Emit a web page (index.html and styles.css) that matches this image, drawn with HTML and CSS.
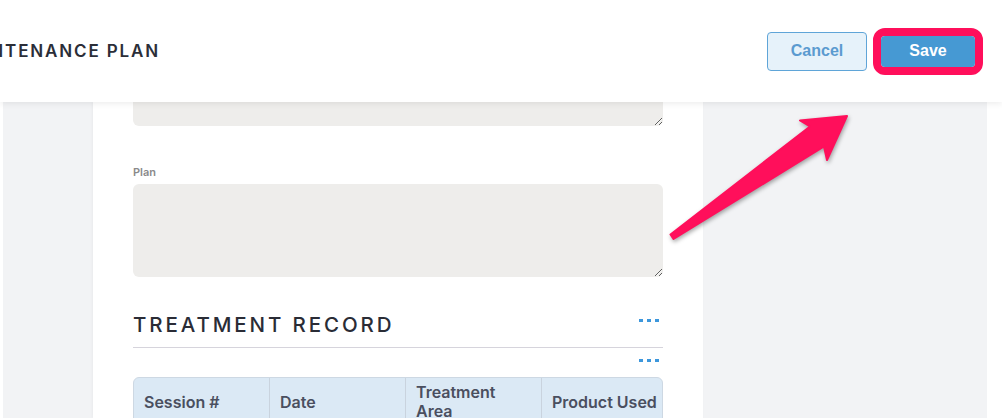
FILE: index.html
```html
<!DOCTYPE html>
<html>
<head>
<meta charset="utf-8">
<link rel="stylesheet" href="styles.css">
</head>
<body>
<header class="topbar">
  <h1 class="title">MAINTENANCE PLAN</h1>
  <div class="actions">
    <button class="btn btn-cancel">Cancel</button>
    <div class="highlight"><button class="btn btn-save">Save</button></div>
  </div>
</header>
<main class="page">
  <section class="card">
    <textarea class="field field-top"></textarea>
    <label class="label">Plan</label>
    <textarea class="field field-plan"></textarea>
    <div class="section-head">
      <h2 class="section-title">TREATMENT RECORD</h2>
      <div class="dots"><i></i><i></i><i></i></div>
    </div>
    <div class="subbar"><div class="dots"><i></i><i></i><i></i></div></div>
    <div class="table">
      <div class="th">Session #</div>
      <div class="th">Date</div>
      <div class="th">Treatment Area</div>
      <div class="th th-last">Product Used</div>
    </div>
  </section>
</main>
<svg class="arrow" width="1002" height="418" viewBox="0 0 1002 418">
  <polygon points="670.5,234.5 810,126.5 800,120.5 847,116 827,160 824,146.5 673.5,239" fill="#ff0f5b" stroke="#ff0f5b" stroke-width="2" stroke-linejoin="round"/>
</svg>
</body>
</html>
```
FILE: styles.css
```css
* { box-sizing: border-box; }
html, body { margin: 0; height: 100%; overflow: hidden; }
body { background: #fff; font-family: Inter, "Noto Sans", sans-serif; position: relative; }

.topbar {
  height: 102px;
  background: #fff;
  display: flex;
  align-items: center;
  justify-content: space-between;
  position: relative;
  z-index: 2;
  box-shadow: 0 2px 6px rgba(0,0,0,0.07);
  overflow: hidden;
}
.title {
  margin: 0 0 0 -48px;
  font-size: 17px;
  font-weight: 600;
  letter-spacing: 1.85px;
  color: #2b2e38;
  white-space: nowrap;
}
.actions { display: flex; align-items: center; gap: 6px; margin-right: 19px; }
.btn {
  font-family: "Liberation Sans", Arial, sans-serif;
  font-weight: 700;
  font-size: 16px;
  border-radius: 4px;
  cursor: pointer;
}
.btn-cancel {
  width: 100px; height: 39px;
  background: #e6f2fa;
  border: 1px solid #5fa5d8;
  color: #5b9bd0;
}
.highlight {
  border: 8px solid #ff0f5b;
  border-radius: 12px;
  display: flex;
}
.btn-save {
  width: 94px; height: 31px;
  background: #4699d3;
  border: none;
  color: #fff;
}

.page {
  height: calc(100% - 102px);
  margin: 0 15px 0 3px;
  background: #f2f3f5;
  overflow: hidden;
  padding-left: 90px;
}
.card {
  width: 610px;
  height: 100%;
  background: #fff;
  padding: 0 40px;
  display: flex;
  flex-direction: column;
  box-shadow: -1px 0 3px rgba(0,0,0,0.04);
}
.field {
  display: block;
  width: 530px;
  background: #eeedeb;
  border: none;
  border-radius: 6px;
  font: inherit;
  flex: none;
}
.field-top { height: 80px; margin-top: -56px; }
.label {
  margin-top: 39px;
  font-size: 11px;
  font-weight: 600;
  color: #8a8a8a;
  line-height: 14px;
  height: 19px;
  flex: none;
}
.field-plan { height: 93px; }
.section-head {
  margin-top: 33px;
  display: flex;
  align-items: center;
  justify-content: space-between;
  height: 38px;
  border-bottom: 1px solid #d6d4dc;
  padding-bottom: 8px;
  flex: none;
}
.section-title {
  margin: 0;
  font-size: 20.5px;
  font-weight: 500;
  letter-spacing: 2.9px;
  color: #2a2c36;
}
.dots { display: flex; gap: 4px; margin-right: 4px; align-self: flex-start; margin-top: 3px; }
.section-head .dots { margin-top: 9px; }
.dots i { width: 4px; height: 3px; background: #3d97dc; display: block; }
.subbar { display: flex; justify-content: flex-end; height: 29px; padding-top: 8px; flex: none; }
.table {
  display: grid;
  grid-template-columns: 136px 136px 136px 122px;
  background: #dbe9f5;
  border: 1px solid #cdd8e3;
  border-radius: 6px 6px 0 0;
  height: 80px;
  flex: none;
}
.th {
  padding: 5px 10px;
  border-right: 1px solid #c9d3de;
  font-size: 16px;
  font-weight: 600;
  color: #4a4f5f;
  line-height: 19px;
  display: flex;
  align-items: flex-start;
  padding-top: 15px;
}
.th:nth-child(3) { padding-top: 5px; }
.th-last { border-right: none; white-space: nowrap; padding-right: 0; }

.arrow {
  position: absolute;
  left: 0; top: 0;
  z-index: 3;
  pointer-events: none;
  filter: drop-shadow(1px 2px 2px rgba(0,0,0,0.35));
}
```
